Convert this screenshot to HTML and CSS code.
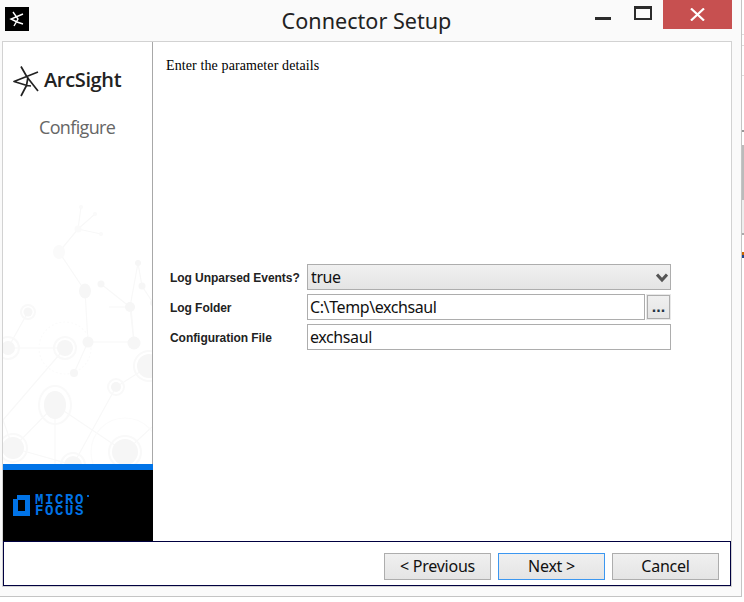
FILE: index.html
```html
<!DOCTYPE html>
<html lang="en">
<head>
<meta charset="utf-8">
<title>Connector Setup</title>
<link rel="stylesheet" href="styles.css">
</head>
<body>
<div class="desktop">
  <div class="window">
    <header class="titlebar">
      <div class="app-icon">
        <svg width="24" height="24" viewBox="0 0 24 24" fill="none" stroke="#fff" stroke-width="1.4"><path d="M8 5l5 7-4 7M18 7L6 12l6 3 6 2"/></svg>
      </div>
      <h1 class="title">Connector Setup</h1>
      <div class="win-controls">
        <span class="win-min"></span>
        <span class="win-max"></span>
        <span class="win-close">
          <svg width="15" height="13" viewBox="0 0 15 13" stroke="#fff" stroke-width="2.2"><path d="M1 0.5l13 12M14 0.5l-13 12"/></svg>
        </span>
      </div>
    </header>
    <div class="panel">
      <div class="panel-body">
        <aside class="sidebar">
          <div class="sidebar-top">
            <div class="brand">
              <svg class="brand-mark" width="26" height="31" viewBox="0 0 26 31" fill="none" stroke="#222" stroke-width="1.7" stroke-linejoin="round"><path d="M8 0.5l6 10.500 11 14M25 6L1 15.500l13 4 4 0.500M15 11l-1.500 8.500L8 30"/></svg>
              <span class="brand-name">ArcSight</span>
            </div>
            <div class="brand-sub">Configure</div>
            <svg class="network" width="149" height="289" viewBox="0 175 149 289" fill="none">
              <g stroke="#f8f8f8" stroke-width="1.200">
                <path d="M78 207l-3 22 17-15M75 229l23 5M75 229L56 252l26 39 3 51-14 31M85 342h46l-3-35-22 0M131 343l-4-36 8-44 4 23 11 17M127 307l-29-23M62 348H5l20-36M62 348L0 420l10 28M52 405l-42 43M52 405v60M52 405l70 47M113 387l-43 78M146 366l-33 21M122 452l27-25M10 448l60 17"/>
                <circle cx="62" cy="348" r="26" stroke="#fbfbfb" stroke-dasharray="2 2"/>
                <circle cx="122" cy="452" r="34" stroke="#fbfbfb"/>
              </g>
              <g fill="#fafafa">
                <circle cx="78" cy="207" r="2"/><circle cx="92" cy="214" r="2"/><circle cx="75" cy="229" r="3.500"/><circle cx="98" cy="234" r="2"/>
                <ellipse cx="56" cy="252" rx="6" ry="7"/>
              </g>
              <g fill="#f6f6f6">
                <ellipse cx="82" cy="291" rx="6" ry="7.500"/><circle cx="98" cy="284" r="3.500"/>
                <circle cx="135" cy="263" r="3"/><circle cx="139" cy="286" r="3.500"/><circle cx="127" cy="307" r="5"/><circle cx="150" cy="303" r="3"/>
                <circle cx="85" cy="342" r="5.500"/><circle cx="131" cy="343" r="6.500"/><circle cx="71" cy="373" r="4"/>
                <circle cx="25" cy="312" r="4.500"/><circle cx="5" cy="348" r="7"/><circle cx="62" cy="348" r="8"/><circle cx="146" cy="366" r="12"/>
                <circle cx="113" cy="387" r="5"/><ellipse cx="52" cy="405" rx="11" ry="14"/><circle cx="10" cy="448" r="11"/><circle cx="122" cy="452" r="13"/><circle cx="70" cy="465" r="9"/>
              </g>
              <g fill="none" stroke="#f9f9f9" stroke-width="2">
                <circle cx="25" cy="312" r="7"/><circle cx="5" cy="348" r="11"/><circle cx="62" cy="348" r="11"/><circle cx="146" cy="366" r="15"/>
                <circle cx="113" cy="387" r="8"/><ellipse cx="52" cy="405" rx="16" ry="19"/><circle cx="10" cy="448" r="14"/><circle cx="122" cy="452" r="16"/><circle cx="70" cy="465" r="12"/>
              </g>
            </svg>
          </div>
          <div class="sidebar-accent"></div>
          <div class="sidebar-foot">
            <svg class="mf-mark" width="17" height="21" viewBox="0 0 17 21" fill="none"><path d="M4 0h13v21H0V4h4zM5 5v11h7V5z" fill="#0073e7" fill-rule="evenodd"/></svg>
            <div class="mf-name">MICRO FOCUS</div>
          </div>
        </aside>
        <main class="content">
          <p class="intro">Enter the parameter details</p>
          <form class="fields">
            <label class="field-label" for="unparsed">Log Unparsed Events?</label>
            <div class="select-wrap">
              <select id="unparsed" class="control select"><option>true</option><option>false</option></select>
              <svg class="chevron" width="12" height="10" viewBox="0 0 12 10" fill="none" stroke="#555" stroke-width="3"><path d="M1 1.500l5 5.500 5-5.500"/></svg>
            </div>
            <label class="field-label" for="folder">Log Folder</label>
            <div class="with-browse">
              <input id="folder" class="control input" type="text" value="C:\Temp\exchsaul">
              <button type="button" class="browse">...</button>
            </div>
            <label class="field-label" for="config">Configuration File</label>
            <input id="config" class="control input" type="text" value="exchsaul">
          </form>
        </main>
      </div>
      <footer class="footer">
        <button type="button" class="btn">&lt; Previous</button>
        <button type="button" class="btn btn-default">Next &gt;</button>
        <button type="button" class="btn">Cancel</button>
      </footer>
    </div>
  </div>
  <div class="edge"></div>
</div>
</body>
</html>
```
FILE: styles.css
```css
* { box-sizing: border-box; }
html, body { margin: 0; padding: 0; background: #fff; }
body { width: 744px; height: 602px; overflow: hidden; font-family: "Noto Sans", sans-serif; }
.desktop { display: flex; align-items: flex-start; }
.window {
  width: 742px; height: 597px; background: #fafafa;
  border-right: 1px solid #c4c4c4; border-bottom: 1px solid #c4c4c4;
  padding-left: 2px;
}
.edge {
  width: 2px; height: 270px;
  background: linear-gradient(to bottom,
    #fff 0 34px, #ddd 34px 35px, #fff 35px 45px, #ddd 45px 46px, #fff 46px 75px, #ddd 75px 76px,
    #fff 76px 130px, #999 130px 132px, #fff 132px 145px, #bbb 145px 200px, #eee 200px 233px,
    #aaa 233px 235px, #fff 235px 252px, #c60 252px 255px, #248 255px 258px, #fff 258px);
}
.titlebar { height: 41px; display: flex; position: relative; margin-left: -2px; }
.app-icon { width: 24px; height: 24px; margin: 7px 0 0 5px; background: #000; }
.title {
  position: absolute; left: 0; right: 8px; top: 5px; margin: 0; text-align: center;
  font-size: 21.600px; line-height: 32px; font-weight: 400; color: #222;
}
.win-controls { margin-left: auto; margin-right: 9px; display: flex; align-items: flex-start; }
.win-min { width: 16px; height: 3px; background: #2b2b2b; margin-top: 17px; margin-right: 23px; }
.win-max { width: 18px; height: 14px; border: 2px solid #2b2b2b; border-top-width: 3px; margin-top: 6px; margin-right: 11px; }
.win-close { width: 69px; height: 29px; background: #c75050; display: flex; align-items: center; justify-content: center; }
.panel { width: 730px; height: 546px; background: #fff; border: 1px solid #d2d2d2; display: flex; flex-direction: column; }
.panel-body { flex: 1; display: flex; min-height: 0; }
.sidebar { width: 150px; display: flex; flex-direction: column; }
.sidebar-top { flex: 1; position: relative; overflow: hidden; border-right: 1px solid #a8a8a8; }
.brand { display: flex; align-items: center; height: 31px; margin: 24px 0 0 10px; position: relative; z-index: 1; }
.brand-mark { flex: none; }
.brand-name { margin: 0 0 4px 5px; font-family: "Open Sans", sans-serif; font-weight: 600; font-size: 20px; line-height: 27px; color: #222; letter-spacing: -0.350px; }
.brand-sub { margin: 18px 0 0 36px; font-family: "Open Sans", sans-serif; font-size: 18px; line-height: 24px; color: #666; letter-spacing: -0.650px; position: relative; z-index: 1; }
.network { position: absolute; left: 0; bottom: 0; display: block; }
.sidebar-accent { height: 6px; background: #0073e7; }
.sidebar-foot { height: 71px; background: #000; display: flex; align-items: flex-start; padding: 25px 0 0 10px; }
.mf-mark { flex: none; }
.mf-name { position: relative; width: 54px; margin-left: 5px; font-family: "Liberation Mono", monospace; font-weight: 700; font-size: 14px; line-height: 10.500px; color: #0073e7; letter-spacing: 1.600px; }
.mf-name::after { content: ""; position: absolute; right: 0; top: 0; width: 2px; height: 2px; background: #0066cc; }
.content { flex: 1; min-width: 0; padding: 15px 0 0 13px; }
.intro { margin: 0; font-family: "Liberation Serif", serif; font-size: 14px; line-height: 18px; color: #000; letter-spacing: 0.110px; }
.fields { margin: 189px 0 0 4px; display: grid; grid-template-columns: 137px 364px; grid-auto-rows: 26px; row-gap: 4px; align-items: center; }
.field-label { padding-top: 2px; font-family: "Liberation Sans", sans-serif; font-weight: 700; font-size: 12px; color: #222; letter-spacing: -0.050px; }
.control { display: block; width: 100%; height: 26px; border: 1px solid #adadad; outline: 0; margin: 0; border-radius: 0; font-family: "Noto Sans", sans-serif; font-size: 16px; color: #111; padding: 0 2px; letter-spacing: -0.400px; }
.input { background: #fff; }
.select-wrap { position: relative; }
.select { appearance: none; -webkit-appearance: none; background: linear-gradient(#f0f0f0, #e4e4e4); padding-left: 3px; }
.chevron { position: absolute; right: 3px; top: 9px; }
.with-browse { display: flex; gap: 1px; }
.with-browse .input { width: 338px; flex: none; }
.browse {
  width: 23px; height: 24px; margin: 1px 0 0 1px; padding: 0; border: 1px solid #adadad; outline: 1px solid #e8e8e8;
  background: linear-gradient(#f0f0f0, #e4e4e4); font-family: "Liberation Sans", sans-serif; font-weight: 700; font-size: 16px; color: #234;
}
.footer { height: 45px; flex: none; border: 1px solid #000040; display: flex; justify-content: flex-end; gap: 7px; padding: 11px 11px 0 0; }
.btn {
  width: 107px; height: 27px; border: 1px solid #adadad; background: linear-gradient(#f0f0f0, #e4e4e4);
  font-family: "Noto Sans", sans-serif; font-size: 16px; letter-spacing: -0.250px; color: #111; padding: 0 0 2px;
}
.btn-default { border-color: #3c97f0; }
```
